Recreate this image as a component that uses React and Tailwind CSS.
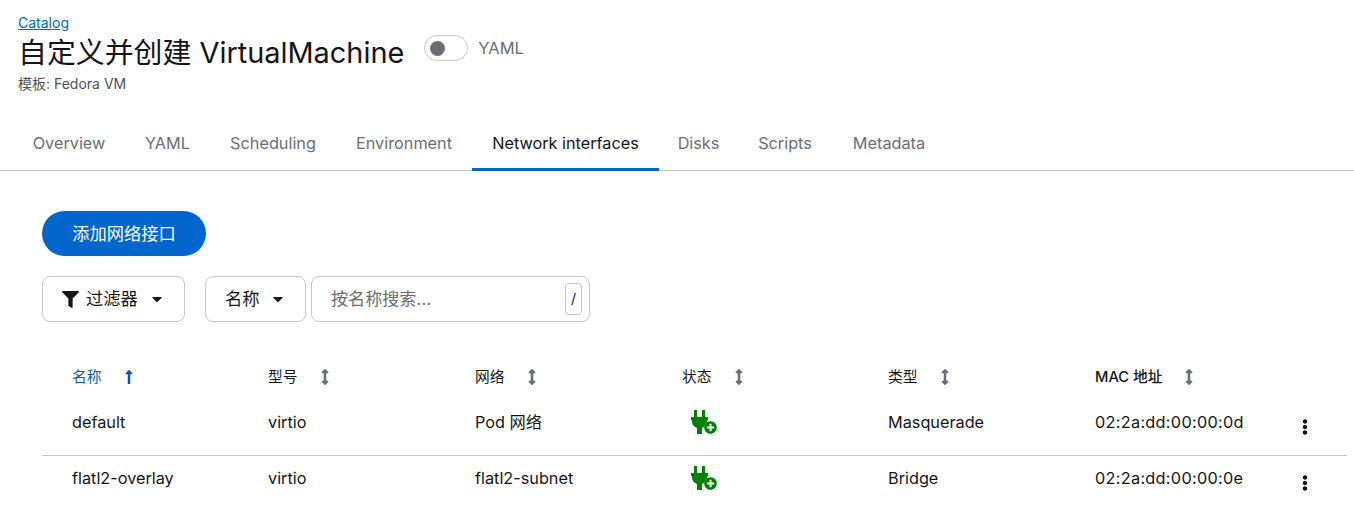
import { FaArrowsAltV, FaCaretDown, FaEllipsisV, FaFilter, FaLongArrowAltUp, FaPlusCircle } from "react-icons/fa";

const tabs = [
  { label: "Overview", width: "w-[112px]" },
  { label: "YAML", width: "w-[85px]" },
  { label: "Scheduling", width: "w-[126px]" },
  { label: "Environment", width: "w-[136px]" },
  { label: "Network interfaces", width: "w-[187px]", active: true },
  { label: "Disks", width: "w-[79px]" },
  { label: "Scripts", width: "w-[94px]" },
  { label: "Metadata", width: "w-[114px]" },
];

const columns = [
  { label: "名称", width: "w-[226px] pl-[30px]", gap: "gap-[21px]", active: true },
  { label: "型号", width: "w-[207px]", gap: "gap-[21px]" },
  { label: "网络", width: "w-[207px]", gap: "gap-[21px]" },
  { label: "状态", width: "w-[206px]", gap: "gap-[21px]" },
  { label: "类型", width: "w-[207px]", gap: "gap-[21px]" },
  { label: "MAC 地址", width: "w-[200px]", gap: "gap-[20px]" },
];

const rows = [
  { name: "default", model: "virtio", network: "Pod 网络", type: "Masquerade", mac: "02:2a:dd:00:00:0d" },
  { name: "flatl2-overlay", model: "virtio", network: "flatl2-subnet", type: "Bridge", mac: "02:2a:dd:00:00:0e" },
];

function StatusIcon() {
  return (
    <div className="relative ml-[8px] h-[26px] w-[28px] text-[#008000]">
      <svg className="absolute left-[1px] top-[1px]" width="17" height="24" viewBox="0 0 17 24" fill="currentColor">
        <rect x="3" y="0" width="3" height="8" />
        <rect x="11" y="0" width="3" height="8" />
        <path d="M0 7H17V10H16V12C16 15 13 17 11 18V24H6V18C4 17 1 15 1 12V10H0Z" />
      </svg>
      <span className="absolute left-[13.5px] top-[11.5px] h-[14px] w-[14px] rounded-full bg-white" />
      <FaPlusCircle className="absolute left-[14px] top-[12px] h-[13px] w-[13px]" />
    </div>
  );
}

function Row({ row, className }) {
  return (
    <div className={`flex items-center text-[16.25px] text-[#151515] ${className}`}>
      <div className="w-[226px] pl-[30px]">{row.name}</div>
      <div className="w-[207px]">{row.model}</div>
      <div className="w-[207px]">{row.network}</div>
      <div className="w-[206px]"><StatusIcon /></div>
      <div className="w-[207px]">{row.type}</div>
      <div className="w-[202px] tracking-[0.3px]">{row.mac}</div>
      <FaEllipsisV className="mt-[9px] h-[16px] w-[16px] text-[#151515]" />
    </div>
  );
}

export default function App() {
  return (
    <div className="h-[507px] overflow-hidden bg-white font-['Inter','Noto_Sans_CJK_SC',sans-serif] text-[#151515]">
      <div className="px-[18px] pt-[14px]">
        <a className="block text-sm leading-[17px] text-[#0066cc] underline">Catalog</a>
        <div className="mt-[3px] flex items-start">
          <h1 className="text-[28.9px] leading-[38px]">自定义并创建 VirtualMachine</h1>
          <div className="ml-[20px] mt-[1px] flex items-center">
            <span className="flex h-[26px] w-[44px] items-center rounded-full border border-[#c7c7c7] pl-[5px]">
              <span className="h-[15px] w-[15px] rounded-full bg-[#6a6e73]" />
            </span>
            <span className="ml-[10px] text-[16.5px] text-[#6a6e73]">YAML</span>
          </div>
        </div>
        <p className="mt-[2px] text-sm leading-[20px] text-[#4f5255]">模板: Fedora VM</p>
      </div>

      <div className="mt-[21px] flex h-[56px] border-b border-[#c7c7c7] pl-[13px]">
        {tabs.map((tab) => (
          <div
            key={tab.label}
            className={
              tab.active
                ? `${tab.width} -mb-px flex items-center justify-center border-b-[3px] border-[#0066cc] pt-[3px] text-[16.25px] text-[#151515]`
                : `${tab.width} flex items-center justify-center pt-[2px] text-[16.25px] text-[#6a6e73]`
            }
          >
            {tab.label}
          </div>
        ))}
      </div>

      <div className="pl-[42px] pr-[7px] pt-[40px]">
        <button className="h-[45px] w-[164px] rounded-full bg-[#0066cc] text-[17.3px] text-white">添加网络接口</button>

        <div className="mt-[20px] flex">
          <button className="flex h-[46px] w-[143px] items-center rounded-lg border border-[#c7c7c7] pl-[19px] text-[17.3px]">
            <FaFilter className="h-[17px] w-[17px]" />
            <span className="ml-[7px]">过滤器</span>
            <FaCaretDown className="ml-[11px] h-[16px] w-[16px]" />
          </button>
          <button className="ml-[20px] flex h-[46px] w-[101px] items-center rounded-lg border border-[#c7c7c7] pl-[19px] text-[17.3px]">
            <span>名称</span>
            <FaCaretDown className="ml-[10px] h-[16px] w-[16px]" />
          </button>
          <div className="ml-[5px] flex h-[46px] w-[279px] items-center justify-between rounded-lg border border-[#c7c7c7] pl-[19px] pr-[7px] text-[17.1px] text-[#6a6e73]">
            <span>按名称搜索...</span>
            <span className="flex h-[32px] w-[17px] items-center justify-center rounded border border-[#c7c7c7] text-sm text-[#151515]">/</span>
          </div>
        </div>

        <div className="mt-[43px] flex h-[24px] items-center text-[14.7px]">
          {columns.map((col) => (
            <div key={col.label} className={`${col.width} flex items-center ${col.gap} ${col.active ? "text-[#0a5aa0]" : "text-[#151515]"}`}>
              <span className={col.label.startsWith("MAC") ? "font-medium" : ""}>{col.label}</span>
              {col.active ? (
                <FaLongArrowAltUp className="h-[16px] w-[14px] text-[#0a5aa0]" />
              ) : (
                <FaArrowsAltV className="h-[16px] w-[14px] text-[#6a6e73]" />
              )}
            </div>
          ))}
        </div>

        <Row row={rows[0]} className="mt-[16px] h-[34px]" />
        <div className="mt-[16px] border-b border-[#c7c7c7]" />
        <Row row={rows[1]} className="mt-[5px] h-[34px]" />
      </div>
    </div>
  );
}
